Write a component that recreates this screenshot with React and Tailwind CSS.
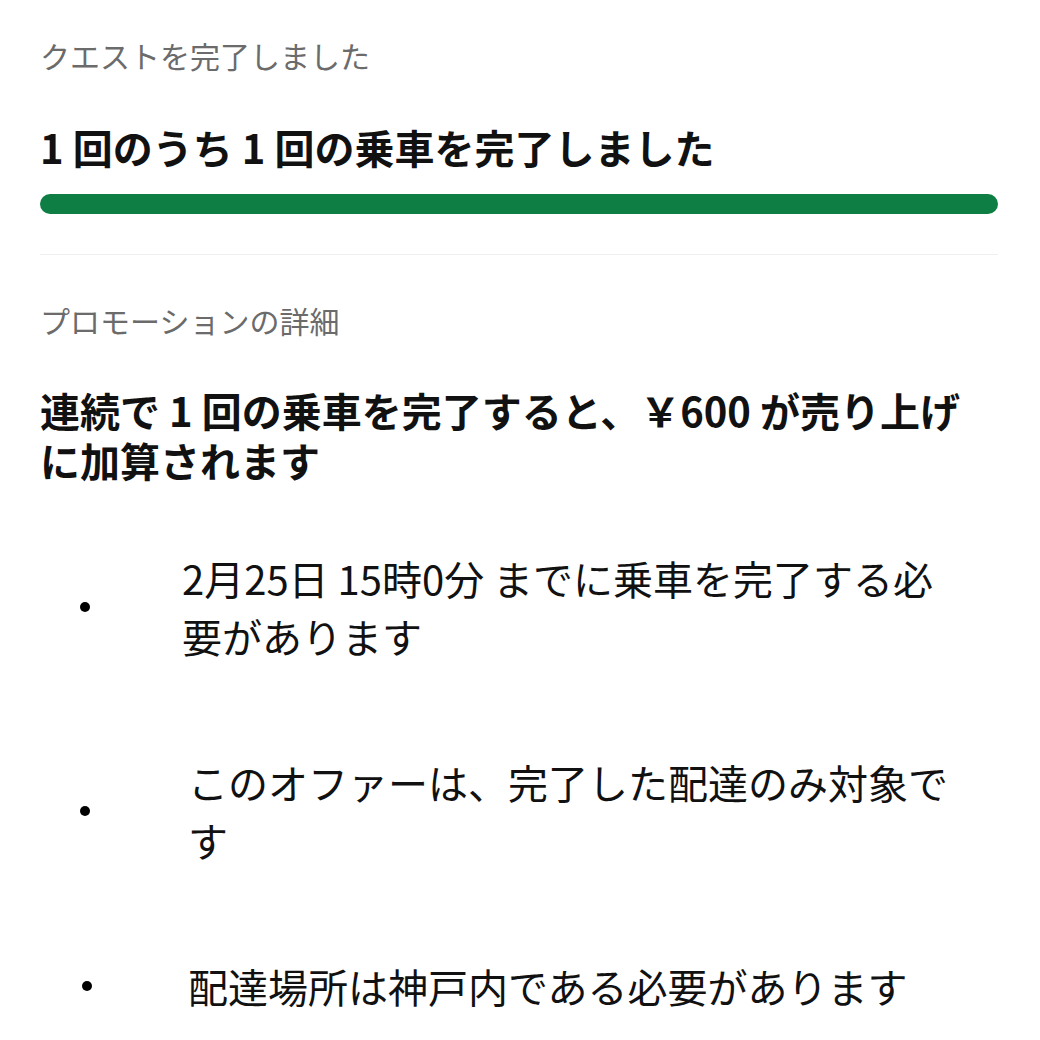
export default function App() {
  return (
    <div className="w-[1040px] h-[1040px] bg-white overflow-hidden px-[40px] pt-[34px] text-black font-['Noto_Sans_CJK_JP',_'Noto_Sans',_sans-serif]">
      <div className="text-[30px] leading-[42px] text-[#6b6b6b]">クエストを完了しました</div>
      <div className="mt-[46px] text-[40px] leading-[50px] font-bold text-[#111]">1 回のうち 1 回の乗車を完了しました</div>
      <div className="mt-[22px] h-[20px] w-[958px] rounded-full bg-[#0f7e45]"></div>
      <div className="mt-[40px] h-px w-[958px] bg-[#efefef]"></div>
      <div className="mt-[44px] text-[30px] leading-[42px] text-[#6b6b6b]">プロモーションの詳細</div>
      <div className="mt-[44px] w-[958px] text-[40px] leading-[50px] font-bold text-[#111]">
        連続で 1 回の乗車を完了すると、￥600 が売り上げに加算されます
      </div>
      <ul className="mt-[64px] flex flex-col gap-[88px] -ml-[40px]">
        <li className="flex items-center">
          <span className="w-[182px] shrink-0 flex">
            <span className="ml-[80px] w-[10px] h-[10px] rounded-full bg-black"></span>
          </span>
          <span className="w-[786px] text-[40px] leading-[58px] text-[#111]">2月25日 15時0分 までに乗車を完了する必要があります</span>
        </li>
        <li className="flex items-center">
          <span className="w-[188px] shrink-0 flex">
            <span className="ml-[80px] w-[10px] h-[10px] rounded-full bg-black"></span>
          </span>
          <span className="w-[780px] text-[40px] leading-[58px] text-[#111]">このオファーは、完了した配達のみ対象です</span>
        </li>
        <li className="flex items-center">
          <span className="w-[188px] shrink-0 flex">
            <span className="ml-[82px] w-[10px] h-[10px] rounded-full bg-black"></span>
          </span>
          <span className="w-[780px] text-[40px] leading-[58px] text-[#111]">配達場所は神戸内である必要があります</span>
        </li>
      </ul>
    </div>
  );
}
